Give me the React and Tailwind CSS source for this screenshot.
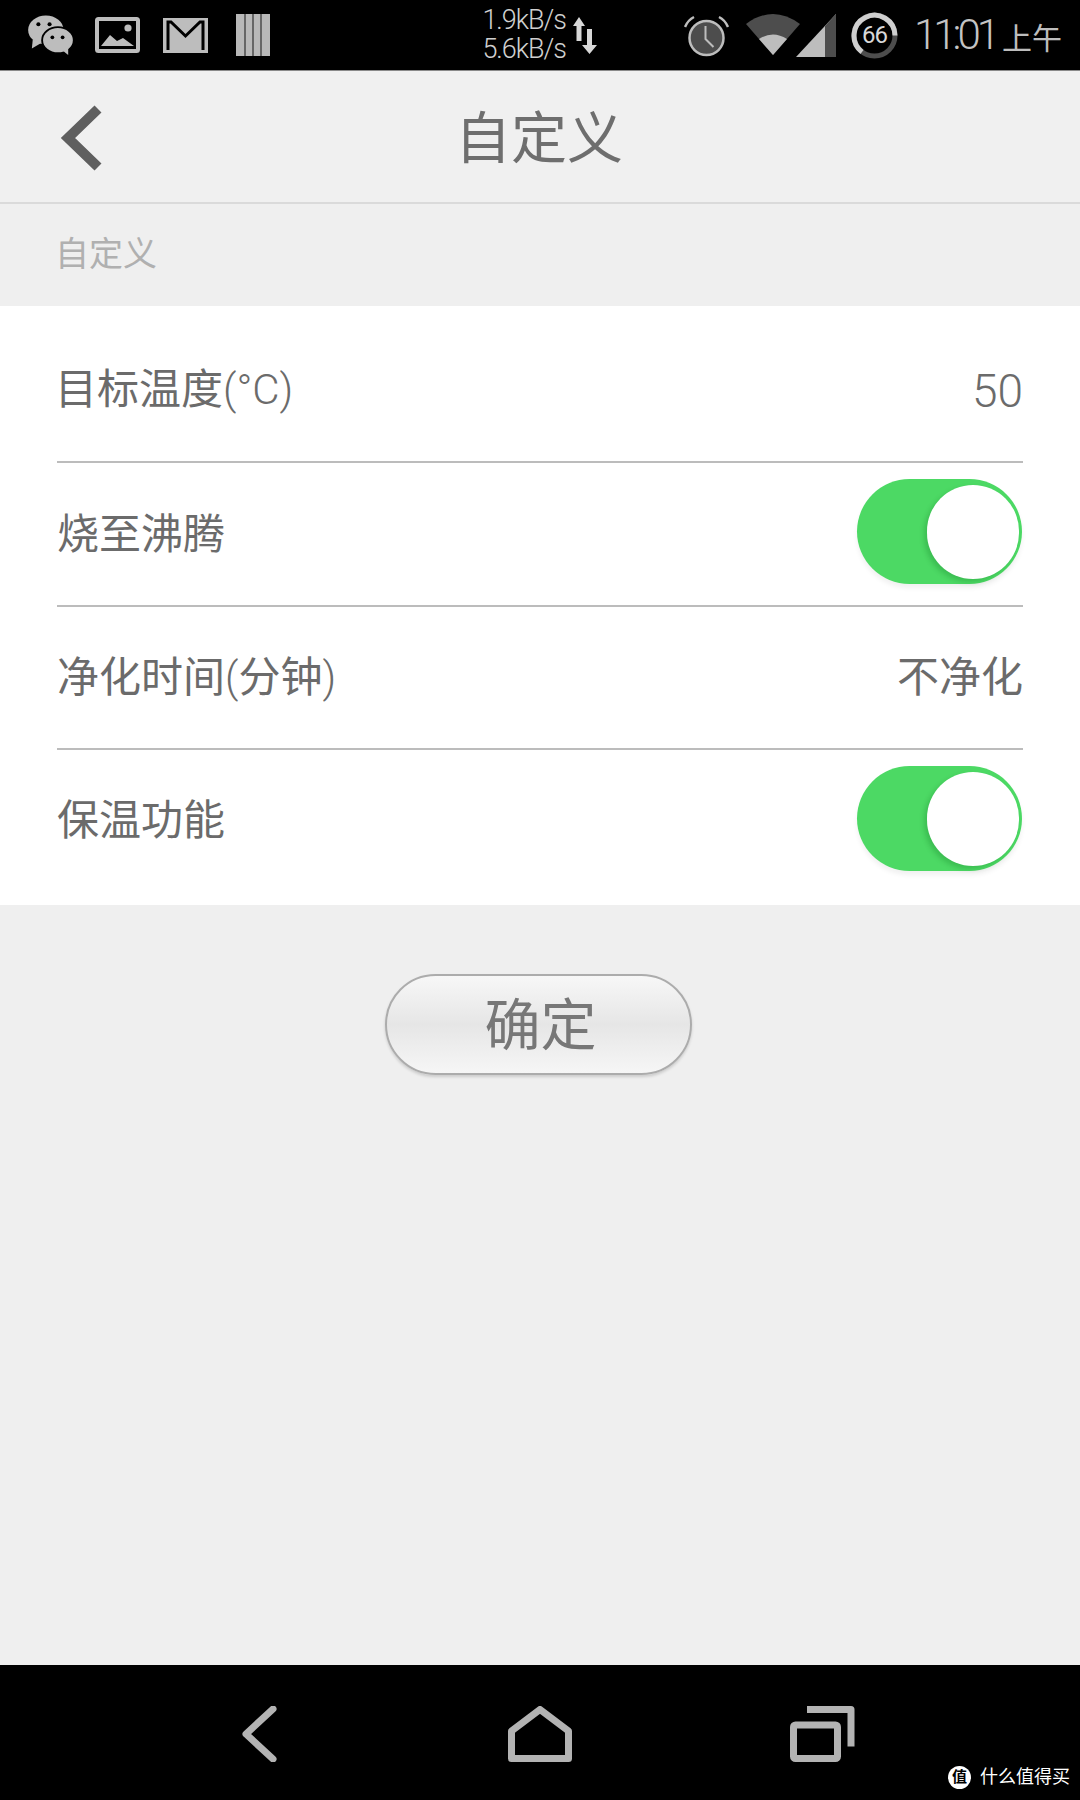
import React from 'react'

const cjk = "font-['Roboto','Noto_Sans_CJK_SC',sans-serif]"

const Toggle = ({ className = '' }) => (
  <div className={`mr-[1px] flex h-[105px] w-[165px] items-center justify-end rounded-full bg-[#4cd964] pr-[3px] shadow-[0_4px_5px_rgba(0,0,0,0.06)] ${className}`}>
    <div className="h-[94px] w-[92px] rounded-full bg-white shadow-[-3px_3px_5px_rgba(0,90,20,0.22)]" />
  </div>
)

const StatusIcons = () => (
  <>
    <svg className="ml-[27px] h-[41px] w-[47px]" viewBox="0 0 50 44" fill="#bdbdbd">
      <ellipse cx="20" cy="16" rx="19" ry="15.5" />
      <path d="M6 26l-1 10 10-6z" />
      <ellipse cx="33" cy="27" rx="17" ry="14" stroke="#000" strokeWidth="2" />
      <path d="M38 38l6 5 0-8z" />
      <circle cx="12" cy="10" r="2.2" fill="#000" />
      <circle cx="24" cy="10" r="2.2" fill="#000" />
      <circle cx="27" cy="24" r="2" fill="#000" />
      <circle cx="38" cy="24" r="2" fill="#000" />
    </svg>
    <svg className="ml-[21px] h-[36px] w-[45px]" viewBox="0 0 45 36" fill="#bdbdbd">
      <rect x="2" y="2" width="41" height="32" rx="1.500" fill="none" stroke="#bdbdbd" strokeWidth="4" />
      <path d="M6 29l9-11 7 6 6-3 11 8z" />
      <circle cx="33" cy="11" r="3.600" />
    </svg>
    <svg className="ml-[23px] h-[35px] w-[45px]" viewBox="0 0 45 35">
      <rect width="45" height="35" fill="#bdbdbd" />
      <path d="M5 32V4h3l14.500 14L37 4h3v28" fill="none" stroke="#000" strokeWidth="3" />
      <path d="M8.500 33V10l14 12 14-12v23z" fill="#bdbdbd" />
    </svg>
    <svg className="ml-[28px] h-[42px] w-[34px]" viewBox="0 0 34 42">
      <rect width="34" height="42" fill="#b8b8b8" />
      <path d="M9 0v42M17 0v42M25 0v42" stroke="#666" strokeWidth="2" />
    </svg>
  </>
)

const RightIcons = () => (
  <>
    <svg className="ml-[7px] h-[38px] w-[24px]" viewBox="0 0 24 38" fill="#d8d8d8">
      <path d="M6 1l6 9H8.500v15h-5V10H0z" />
      <path d="M14 13h5v16h5l-7.500 9L9 29h5z" />
    </svg>
    <svg className="ml-[87px] h-[44px] w-[45px]" viewBox="0 0 45 44">
      <circle cx="22.500" cy="25" r="17" fill="#4d4d4d" stroke="#bdbdbd" strokeWidth="2.500" />
      <path d="M21.500 13v13l8 8" fill="none" stroke="#bdbdbd" strokeWidth="2" />
      <path d="M1 14q3-7 9-10M44 14q-3-7-9-10" fill="none" stroke="#bdbdbd" strokeWidth="2.500" />
    </svg>
    <svg className="ml-[17px] h-[46px] w-[90px]" viewBox="0 0 90 46">
      <path d="M0 12q27-20 54 0L27 43z" fill="#4d4d4d" />
      <path d="M13 27q14-9 28 0L27 43z" fill="#bdbdbd" />
      <path d="M50 45L90 2v43z" fill="#bdbdbd" />
      <path d="M79 14l11-12v43H79z" fill="#4d4d4d" />
    </svg>
    <div className="relative ml-[15px] flex h-[47px] w-[47px] items-center justify-center font-['Roboto'] text-[24px] tracking-[-1px] text-[#d8d8d8]">
      <svg className="absolute inset-0 h-[47px] w-[47px]" viewBox="0 0 47 47" fill="none">
        <circle cx="23.500" cy="23.500" r="20.500" stroke="#4d4d4d" strokeWidth="5" />
        <path d="M44 23.500A20.500 20.500 0 1 0 11 40" stroke="#cfcfcf" strokeWidth="5" />
      </svg>
      <span>66</span>
    </div>
    <span className="ml-[16px] font-['Roboto'] text-[42px] font-light leading-none tracking-[-4px] text-[#c4c4c4]">11:01</span>
    <span className="ml-[6px] mt-[8px] text-[30px] font-normal leading-none text-[#bdbdbd]">上午</span>
  </>
)

const NavBar = () => (
  <div className="relative flex h-[135px] items-start bg-black pt-[41px]">
    <svg className="ml-[240px] h-[56px] w-[40px]" viewBox="0 0 40 56" fill="none" stroke="#b3b3b3" strokeWidth="7" strokeLinecap="round" strokeLinejoin="round">
      <path d="M33 3L6 28l27 25" />
    </svg>
    <svg className="ml-[228px] h-[56px] w-[64px]" viewBox="0 0 64 56" fill="none" stroke="#b3b3b3" strokeWidth="7" strokeLinejoin="round">
      <path d="M32 3.500L3.500 25v27.500h57V25z" />
    </svg>
    <svg className="ml-[218px] h-[56px] w-[66px]" viewBox="0 0 66 56" fill="none" stroke="#b3b3b3" strokeWidth="7" strokeLinejoin="round">
      <rect x="3.500" y="19" width="44" height="33.500" rx="2" />
      <path d="M17 3.500h44v37" />
    </svg>
    <div className={`absolute right-[10px] bottom-[11px] flex items-center gap-[9px] text-[18px] leading-[24px] text-white ${cjk}`}>
      <span className="flex h-[23px] w-[23px] items-center justify-center rounded-full bg-white text-[15px] font-bold text-black">值</span>
      <span>什么值得买</span>
    </div>
  </div>
)

const App = () => {
  return (
    <div className={`flex h-[1800px] w-[1080px] flex-col overflow-hidden bg-[#efefef] ${cjk}`}>
      {/* status bar */}
      <div className="flex h-[71px] items-center border-b border-[#8a8a8a] bg-black">
        <StatusIcons />
        <div className="ml-[96px] w-[200px] text-right font-['Roboto'] text-[27px] font-light leading-[29px] tracking-[-1px] text-[#d0d0d0]">
          <div>1.9kB/s</div>
          <div>5.6kB/s</div>
        </div>
        <RightIcons />
      </div>

      {/* header */}
      <div className="grid h-[133px] grid-cols-[1fr_auto_1fr] items-center border-b-2 border-[#dadada] bg-[#f0f0f0]">
        <svg className="ml-[60px] mt-[3px] h-[66px] w-[42px]" viewBox="0 0 42 66" fill="none" stroke="#5f5f5f" strokeWidth="10">
          <path d="M38 4L8 33l30 29" />
        </svg>
        <h1 className="mr-[2px] mt-[5px] text-[56px] font-normal leading-none text-[#6e6e6e]">自定义</h1>
        <div />
      </div>

      {/* section label */}
      <div className="flex h-[102px] items-center pb-[2px] pl-[55px] text-[34px] text-[#b0b0b0]">自定义</div>

      {/* settings */}
      <div className="bg-white px-[57px] text-[42px] text-[#6b6b6b]">
        <div className="flex h-[157px] items-center justify-between border-b-2 border-[#bcbcbc] pt-[12px]">
          <span className="-ml-[2px]">目标温度<span className="font-light">(°C)</span></span>
          <span className="mt-[3px] text-[46px] font-light">50</span>
        </div>
        <div className="flex h-[144px] items-center justify-between border-b-2 border-[#bcbcbc]">
          <span>烧至沸腾</span>
          <Toggle className="mb-[5px]" />
        </div>
        <div className="flex h-[143px] items-center justify-between border-b-2 border-[#bcbcbc]">
          <span>净化时间<span className="font-light">(</span>分钟<span className="font-light">)</span></span>
          <span>不净化</span>
        </div>
        <div className="flex h-[155px] items-center justify-between pb-[18px]">
          <span className="mt-[4px]">保温功能</span>
          <Toggle />
        </div>
      </div>

      {/* confirm */}
      <div className="flex flex-1 justify-center pt-[69px]">
        <button className="mr-[4px] flex h-[101px] w-[307px] items-center justify-center rounded-full border-2 border-[#acacac] bg-gradient-to-b from-[#f7f7f7] via-[#e6e6e6] to-[#f6f6f6] pl-[5px] pt-[3px] text-[56px] leading-none text-[#777777] shadow-[0_2px_3px_rgba(0,0,0,0.15)]">
          确定
        </button>
      </div>

      <NavBar />
    </div>
  )
}

export default App
